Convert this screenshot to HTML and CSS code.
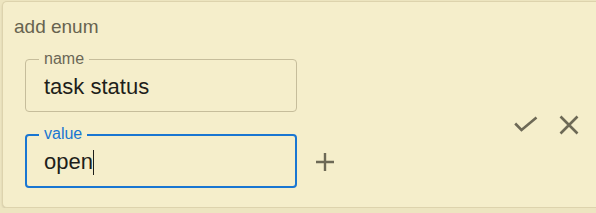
FILE: index.html
```html
<!DOCTYPE html>
<html>
<head>
<meta charset="utf-8">
<link rel="stylesheet" href="styles.css">
</head>
<body>
<div class="card">
  <div class="title">add enum</div>
  <div class="row">
    <div class="fields">
      <div class="field">
        <span class="field-label">name</span>
        <span class="field-value">task status</span>
      </div>
      <div class="value-row">
        <div class="field focused">
          <span class="field-label">value</span>
          <span class="field-value">open<span class="caret"></span></span>
        </div>
        <svg class="plus" width="20" height="20" viewBox="0 0 20 20"><path d="M10 1V19M1 10H19" stroke="#6d6956" stroke-width="2.4" fill="none"/></svg>
      </div>
    </div>
    <div class="actions">
      <svg class="check" width="24" height="18" viewBox="0 0 24 18"><path d="M1.2 7.5L7.5 14L22.5 1.5" stroke="#6d6956" stroke-width="2.6" fill="none"/></svg>
      <svg class="close" width="20" height="20" viewBox="0 0 20 20"><path d="M1.5 1.5L18.5 18.5M18.5 1.5L1.5 18.5" stroke="#6d6956" stroke-width="2.6" fill="none"/></svg>
    </div>
  </div>
</div>
</body>
</html>
```
FILE: styles.css
```css
html, body {
  margin: 0;
  padding: 0;
  background: #ede5c0;
  overflow: hidden;
  font-family: "Liberation Sans", Arial, sans-serif;
}
.card {
  margin: 1px 0 0 2px;
  box-sizing: border-box;
  background: #f5eecb;
  border: 1px solid #ddd3ad;
  border-right: 0;
  border-radius: 5px 0 0 5px;
  box-shadow: 0 1px 2px rgba(0,0,0,0.12);
  padding: 14px 0 19px 11px;
}
.title {
  font-size: 19px;
  line-height: 22px;
  color: #67634f;
}
.row {
  display: flex;
  align-items: center;
  margin-top: 21px;
  padding-left: 11px;
}
.fields {
  display: flex;
  flex-direction: column;
  gap: 22px;
}
.value-row {
  display: flex;
  align-items: center;
}
.field {
  position: relative;
  width: 272px;
  height: 53px;
  box-sizing: border-box;
  border: 1px solid #c6bd9b;
  border-radius: 4px;
  padding: 0 18px;
  display: flex;
  align-items: center;
}
.field.focused {
  height: 54px;
  border: 2px solid #1976d2;
  padding: 0 17px;
}
.field-label {
  position: absolute;
  top: -9px;
  left: 13px;
  padding: 0 5px;
  background: #f5eecb;
  font-size: 16px;
  line-height: 16px;
  color: #6b6756;
}
.focused .field-label {
  top: -10px;
  left: 12px;
  color: #1976d2;
}
.field-value {
  font-size: 22px;
  line-height: 26px;
  color: #1e1e1a;
  margin-top: 2px;
}
.caret {
  display: inline-block;
  width: 1.5px;
  height: 25px;
  background: #1e1e1a;
  vertical-align: -6px;
}
.plus {
  display: block;
  margin-left: 18px;
  margin-top: 2px;
}
.actions {
  display: flex;
  align-items: center;
  margin-left: 179px;
  margin-top: 2px;
  gap: 21px;
}
.check, .close {
  display: block;
}
```
